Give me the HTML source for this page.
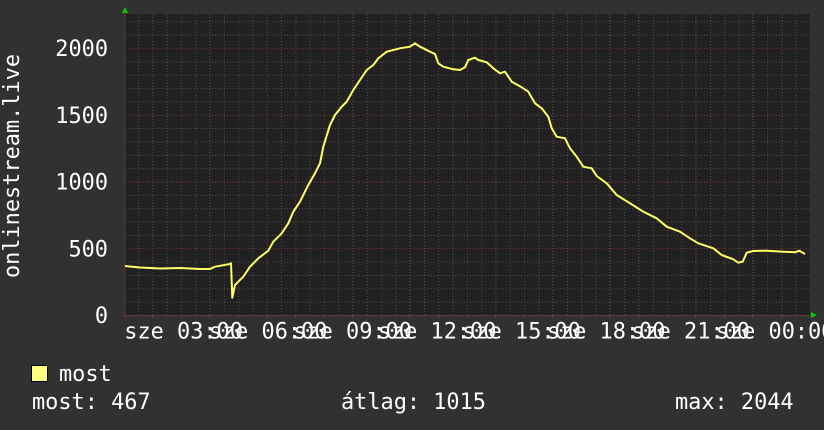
<!DOCTYPE html>
<html><head><meta charset="utf-8"><style>
html,body{margin:0;padding:0;background:#313131;}
svg{display:block}
text{font-family:"DejaVu Sans Mono","Liberation Mono",monospace;font-size:21.9px;fill:#fff}
</style></head><body>
<svg width="824" height="430" viewBox="0 0 824 430" xmlns="http://www.w3.org/2000/svg">
<defs>
<pattern id="ph" patternUnits="userSpaceOnUse" x="125" y="315" width="3" height="13.35">
<rect x="0" y="0" width="1" height="1" fill="#4e4e4e"/>
</pattern>
<pattern id="pv" patternUnits="userSpaceOnUse" x="138" y="14" width="14.3" height="3">
<rect x="0" y="0" width="1" height="1" fill="#4e4e4e"/>
</pattern>
</defs>
<rect width="824" height="430" fill="#313131"/>
<rect x="125" y="14" width="685" height="301" fill="#212121"/>
<rect x="125" y="14" width="685" height="301" fill="url(#ph)"/>
<rect x="125" y="14" width="685" height="301" fill="url(#pv)"/>
<g stroke="#6a2e2e" stroke-width="1" stroke-dasharray="1,2">
<path d="M125 48.5H810M125 115.5H810M125 182.5H810M125 248.5H810"/>
<path d="M152.5 14V315M181.5 14V315M209.5 14V315M238.5 14V315M267.5 14V315M295.5 14V315M324.5 14V315M352.5 14V315M381.5 14V315M409.5 14V315M438.5 14V315M467.5 14V315M495.5 14V315M524.5 14V315M552.5 14V315M581.5 14V315M609.5 14V315M638.5 14V315M667.5 14V315M695.5 14V315M724.5 14V315M752.5 14V315M781.5 14V315"/>
</g>
<g stroke="#8a3030" stroke-width="1">
<path d="M152.5 315V318M181.5 315V318M209.5 315V318M238.5 315V318M267.5 315V318M295.5 315V318M324.5 315V318M352.5 315V318M381.5 315V318M409.5 315V318M438.5 315V318M467.5 315V318M495.5 315V318M524.5 315V318M552.5 315V318M581.5 315V318M609.5 315V318M638.5 315V318M667.5 315V318M695.5 315V318M724.5 315V318M752.5 315V318M781.5 315V318"/>
</g>
<line x1="125" y1="12" x2="125" y2="318" stroke="#5a3a3a"/>
<line x1="122" y1="315.5" x2="812" y2="315.5" stroke="#5a3a3a"/>
<polygon points="122,13 125,7 128,13" fill="#00cc00"/>
<polygon points="811,312 817,315 811,318" fill="#00cc00"/>
<polyline fill="none" stroke="#ffff66" stroke-width="2" stroke-linejoin="round" points="
125,266 140,267.5 160,268.5 180,268 200,269 210,269 215,266.7 230,264 231,263.3 232.3,297.7 235,285 243.3,276.7 250,266.7 258.3,258.3 268.3,250.7 273.3,241.7 281.7,233.3 288.3,223.3 293.3,211.7 300,201.7 308.3,185 315,173.3 320,163.3 323.3,146.7 330,125 335,115 341.7,106.7 346.7,101.7 353.3,90 360,80 366.7,70 373.3,65 378.3,58.3 386.7,51.7 400,48.3 410,46.7 415,43.3 420,46.7 430,51.7 435,54 438.3,63.3 443.3,66.7 453.3,69.3 460,70 465,67.3 468.3,60 475,57.7 478.3,60 486.7,62.3 493.3,68.3 500,73.3 505,71.7 511.7,81.7 521.7,87.3 528.3,91.7 535,103.3 541.7,108.3 548.3,116.7 551.7,128.3 556.7,136.7 565,138.3 570,148.3 576.7,156.7 583.3,166.7 591.7,168.3 596.7,176 606.7,183.3 616.7,195 630,203.3 643.3,211.7 656.7,218.3 666.7,226.7 680,231.7 690,238.3 698.3,243.3 713.3,248.3 721.7,255 733.3,259.3 738.3,262.7 742.7,261.7 746.7,252.7 753.3,251 766.7,250.7 783.3,251.7 795,252.3 799.3,250.7 805,254"/>
<g text-anchor="end">
<text x="108" y="56">2000</text>
<text x="108" y="123">1500</text>
<text x="108" y="189.5">1000</text>
<text x="108" y="256.5">500</text>
<text x="108" y="323">0</text>
</g>
<text transform="translate(19,166) rotate(-90)" text-anchor="middle">onlinestream.live</text>
<text x="124.3" y="338.3">sze 03:00</text>
<text x="208.8" y="338.3">sze 06:00</text>
<text x="293.3" y="338.3">sze 09:00</text>
<text x="377.8" y="338.3">sze 12:00</text>
<text x="462.3" y="338.3">sze 15:00</text>
<text x="546.8" y="338.3">sze 18:00</text>
<text x="631.3" y="338.3">sze 21:00</text>
<text x="715.8" y="338.3">sze 00:00</text>
<rect x="31.5" y="365.5" width="16" height="16" fill="#ffff80" stroke="#000"/>
<text x="59" y="381">most</text>
<text x="32" y="409">most: 467</text>
<text x="341" y="409">átlag: 1015</text>
<text x="675" y="409">max: 2044</text>
</svg>
</body></html>
